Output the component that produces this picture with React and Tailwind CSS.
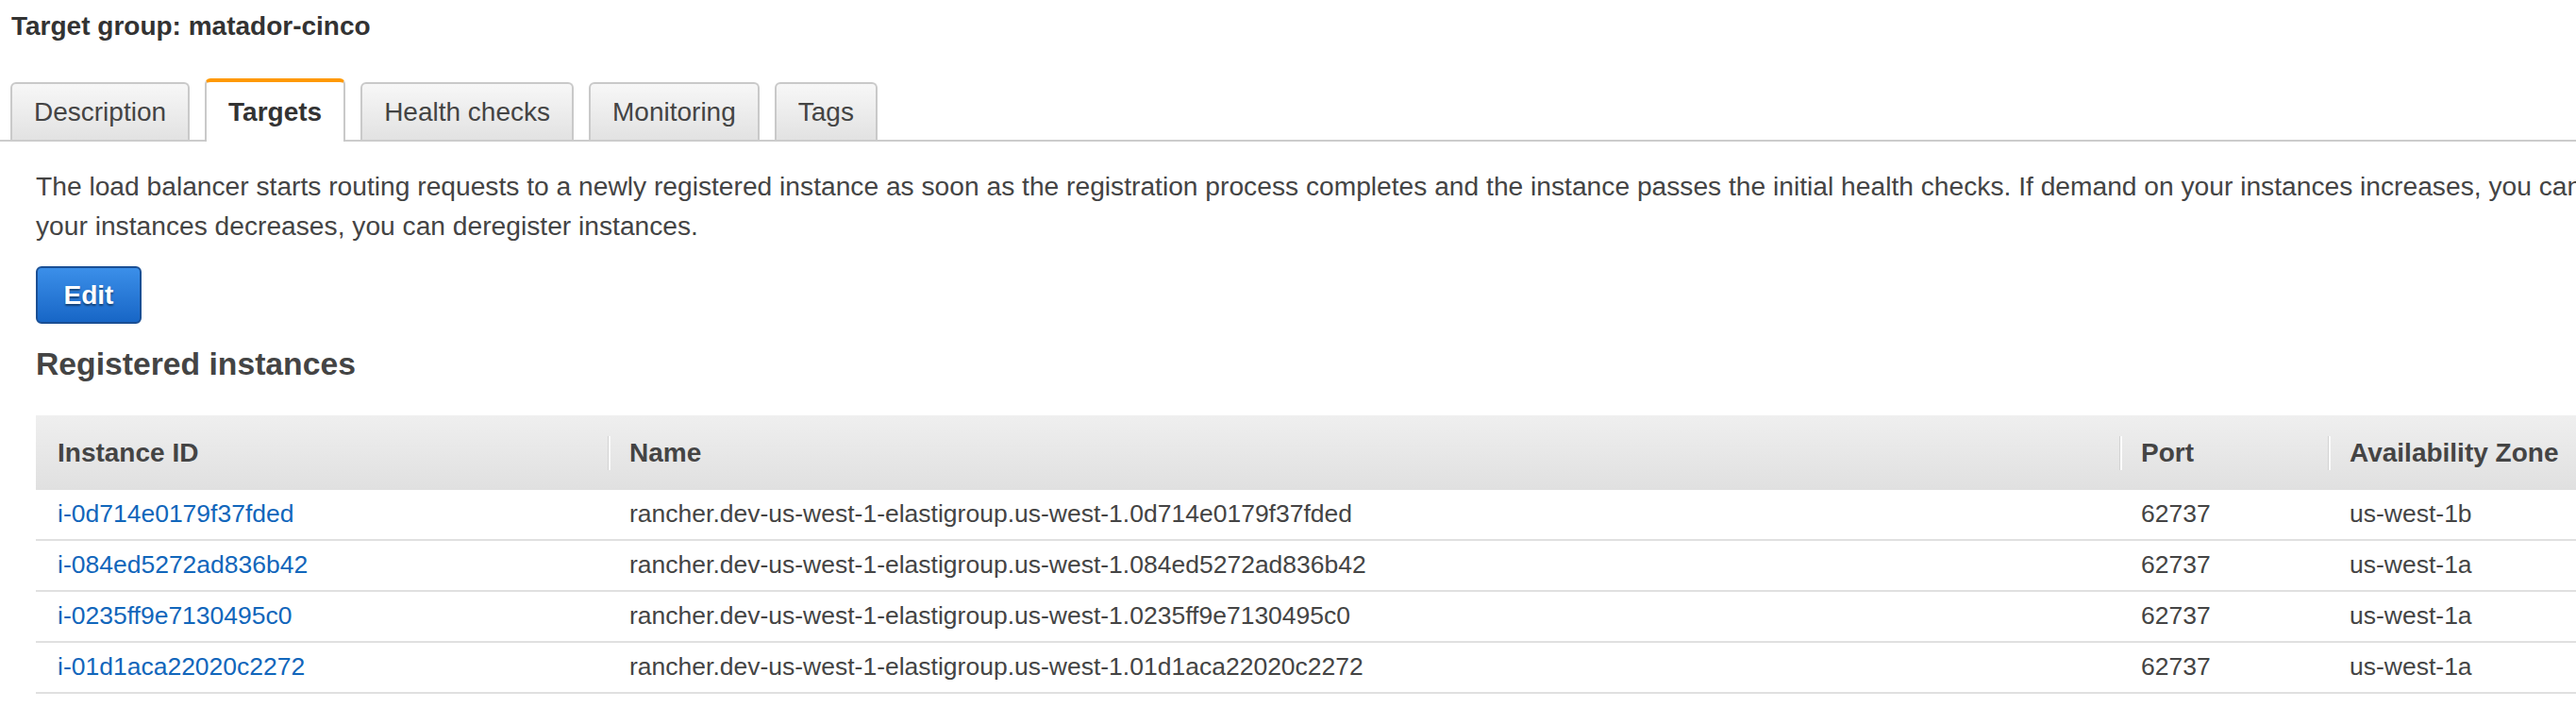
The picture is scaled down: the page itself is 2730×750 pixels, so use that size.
const tabs = [
  { label: "Description" },
  { label: "Targets", active: true },
  { label: "Health checks" },
  { label: "Monitoring" },
  { label: "Tags" },
];

const instances = [
  { id: "i-0d714e0179f37fded", zone: "us-west-1b" },
  { id: "i-084ed5272ad836b42", zone: "us-west-1a" },
  { id: "i-0235ff9e7130495c0", zone: "us-west-1a" },
  { id: "i-01d1aca22020c2272", zone: "us-west-1a" },
];

const cols = "grid grid-cols-[606px_1602px_221px_400px]";

const HeaderCell = ({ children, divider }) => (
  <div className="flex items-center h-full">
    {divider ? (
      <span className="h-[36px] w-[3px] border-l border-[#d3d3d3] bg-[#fbfbfb]" />
    ) : null}
    <span className={divider ? "ml-[20px]" : "ml-[23px]"}>{children}</span>
  </div>
);

export default function App() {
  return (
    <div className="w-full overflow-hidden bg-white text-[#444] font-['Liberation_Sans',Arial,sans-serif]">
      {/* Title */}
      <div className="h-[56px] flex items-center pl-[12px] text-[28px] font-bold text-[#333]">
        Target group: matador-cinco
      </div>

      {/* Tabs */}
      <div className="flex items-end gap-[16px] pl-[11px] h-[94px] border-b-2 border-[#cccccc]">
        {tabs.map((tab) =>
          tab.active ? (
            <div
              key={tab.label}
              className="relative z-10 -mb-[2px] h-[67px] px-[23px] flex items-center bg-white border-2 border-b-0 border-[#c9c9c9] border-t-[4px] border-t-[#ff9900] rounded-t-[6px] text-[28px] font-bold text-[#333]"
            >
              {tab.label}
            </div>
          ) : (
            <div
              key={tab.label}
              className="h-[61px] px-[23px] flex items-center bg-linear-to-b from-[#f7f7f7] to-[#e2e2e2] border-2 border-b-0 border-[#c9c9c9] rounded-t-[6px] text-[28px] text-[#444]"
            >
              {tab.label}
            </div>
          )
        )}
      </div>

      {/* Body */}
      <div className="pl-[38px]">
        <p className="mt-[26px] text-[28.2px] leading-[42px] whitespace-nowrap">
          The load balancer starts routing requests to a newly registered instance as soon as the registration process completes and the instance passes the initial health checks. If demand on your instances increases, you can register additional instances. If demand on
          <br />
          your instances decreases, you can deregister instances.
        </p>

        <button className="mt-[22px] w-[112px] h-[61px] rounded-[6px] border-2 border-[#1a4f94] bg-linear-to-b from-[#3b8fe9] to-[#1766c6] text-white text-[28px] font-bold [text-shadow:0_2px_2px_rgba(0,0,0,0.45)]">
          Edit
        </button>

        <h2 className="mt-[22px] text-[33.7px] leading-[40px] font-bold text-[#444]">
          Registered instances
        </h2>

        {/* Table */}
        <div className="mt-[35px] w-[2829px]">
          <div className={`${cols} h-[79px] bg-linear-to-b from-[#efefef] to-[#e0e0e0] text-[28px] font-bold text-[#444]`}>
            <HeaderCell>Instance ID</HeaderCell>
            <HeaderCell divider>Name</HeaderCell>
            <HeaderCell divider>Port</HeaderCell>
            <HeaderCell divider>Availability Zone</HeaderCell>
          </div>
          {instances.map((row) => (
            <div
              key={row.id}
              className={`${cols} h-[54px] items-center border-b-2 border-[#e0e0e0] text-[26.5px] text-[#444]`}
            >
              <a href="#" className="pl-[23px] text-[#1166bb]">
                {row.id}
              </a>
              <div className="pl-[23px]">
                rancher.dev-us-west-1-elastigroup.us-west-1.{row.id.slice(2)}
              </div>
              <div className="pl-[23px]">62737</div>
              <div className="pl-[23px]">{row.zone}</div>
            </div>
          ))}
        </div>
      </div>
    </div>
  );
}
